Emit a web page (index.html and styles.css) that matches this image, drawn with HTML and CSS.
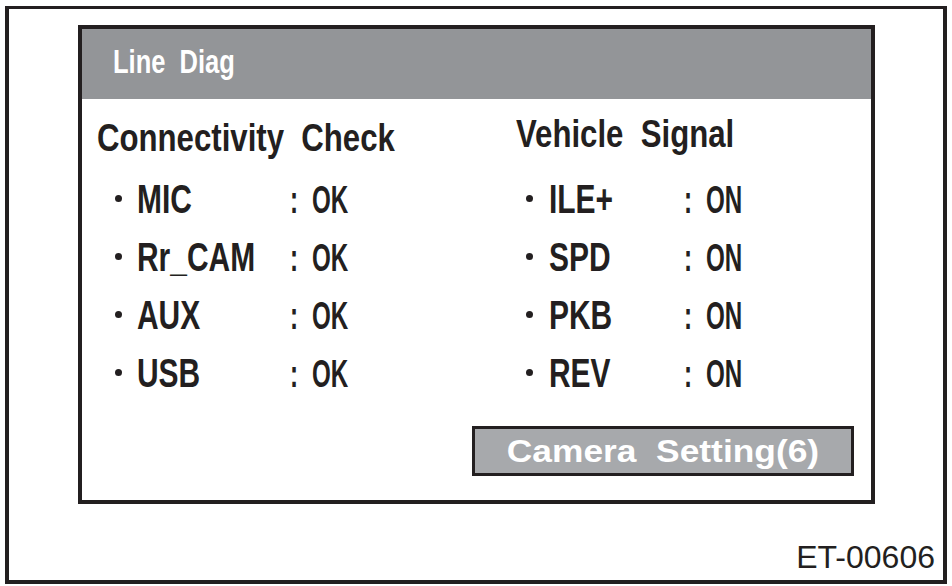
FILE: index.html
```html
<!DOCTYPE html>
<html lang="en">
<head>
    <meta charset="UTF-8">
    <meta name="viewport" content="width=device-width, initial-scale=1.0">
    <title>Line Diag</title>
    <link rel="stylesheet" href="styles.css">
</head>
<body>
    <div class="frame">
        <div class="screen">
            <div class="title-bar"><span class="narrow">Line&nbsp; Diag</span></div>

            <div class="screen-body">
                <section class="col col-left">
                    <h2 class="col-title"><span class="narrow">Connectivity&nbsp; Check</span></h2>
                    <ul class="status-list">
                        <li class="status-row"><span class="dot"></span><span class="name">MIC</span><span class="sep">:</span><span class="value">OK</span></li>
                        <li class="status-row"><span class="dot"></span><span class="name">Rr_CAM</span><span class="sep">:</span><span class="value">OK</span></li>
                        <li class="status-row"><span class="dot"></span><span class="name">AUX</span><span class="sep">:</span><span class="value">OK</span></li>
                        <li class="status-row"><span class="dot"></span><span class="name">USB</span><span class="sep">:</span><span class="value">OK</span></li>
                    </ul>
                </section>

                <section class="col col-right">
                    <h2 class="col-title"><span class="narrow">Vehicle&nbsp; Signal</span></h2>
                    <ul class="status-list">
                        <li class="status-row"><span class="dot"></span><span class="name">ILE+</span><span class="sep">:</span><span class="value">ON</span></li>
                        <li class="status-row"><span class="dot"></span><span class="name">SPD</span><span class="sep">:</span><span class="value">ON</span></li>
                        <li class="status-row"><span class="dot"></span><span class="name">PKB</span><span class="sep">:</span><span class="value">ON</span></li>
                        <li class="status-row"><span class="dot"></span><span class="name">REV</span><span class="sep">:</span><span class="value">ON</span></li>
                    </ul>
                    <button class="btn"><span class="btn-label">Camera&nbsp; Setting(6)</span></button>
                </section>
            </div>
        </div>

        <div class="code">ET-00606</div>
    </div>
</body>
</html>
```

FILE: styles.css
```css
:root {
    --ink: #231f20;
    --bar-gray: #939598;
    --btn-gray: #a7a9ac;
}

* {
    box-sizing: border-box;
}

body {
    margin: 0;
    background: #fff;
    color: var(--ink);
    font-family: 'Liberation Sans', Arial, sans-serif;
}

/* condensed look: no narrow face installed, so squeeze the bold one */
.narrow {
    display: inline-block;
    transform: scaleX(.82);
    transform-origin: left;
    white-space: nowrap;
}

.frame {
    width: 942px;
    height: 578px;
    margin: 6px 0 0 5px;
    border: 4px solid var(--ink);
    border-top-width: 3px;
}

.screen {
    width: 797px;
    height: 479px;
    margin: 16px 0 0 69px;
    border: 4px solid var(--ink);
    display: flex;
    flex-direction: column;
}

.title-bar {
    height: 70px;
    padding: 0 0 6px 31px;
    background: var(--bar-gray);
    color: #fff;
    font-weight: bold;
    font-size: 34px;
    line-height: 64px;
}

.title-bar .narrow {
    transform: scaleX(.75);
}

.screen-body {
    flex: 1;
    display: grid;
    grid-template-columns: 390px 1fr;
}

.col-title {
    margin: 0;
    font-weight: bold;
    font-size: 38px;
    line-height: 44px;
}

.col-left {
    padding: 17px 0 0 15px;
}

.col-right {
    padding-top: 13px;
}

.col-right .col-title {
    padding-left: 44px;
}

.status-list {
    list-style: none;
    margin: 10px 0 0;
    padding: 0;
}

.col-left .status-list {
    padding-left: 18px;
}

.col-right .status-list {
    margin-top: 14px;
    padding-left: 54px;
}

.status-row {
    display: grid;
    grid-template-columns: 22px 153px 22px auto;
    align-items: baseline;
    height: 58px;
    line-height: 58px;
}

.col-right .status-row {
    grid-template-columns: 23px 135px 22px auto;
}

.dot {
    align-self: start;
    width: 7px;
    height: 7px;
    margin-top: 25px;
    border-radius: 50%;
    background: var(--ink);
}

.name {
    display: inline-block;
    font-weight: bold;
    font-size: 41px;
    transform: scaleX(.73);
    transform-origin: left;
    white-space: nowrap;
}

.sep,
.value {
    display: inline-block;
    font-weight: bold;
    font-size: 39px;
    transform: scaleX(.62);
    transform-origin: left;
}

.btn {
    display: block;
    width: 382px;
    height: 50px;
    margin-top: 24px;
    padding: 2px 0 0;
    border: 3px solid var(--ink);
    background: var(--btn-gray);
    color: #fff;
    font-family: 'Liberation Sans', Arial, sans-serif;
    font-weight: bold;
    font-size: 31px;
    line-height: 42px;
    text-align: center;
}

.btn-label {
    display: inline-block;
    transform: scaleX(1.14);
    white-space: nowrap;
}

.code {
    margin-top: 35px;
    padding-right: 8px;
    text-align: right;
    font-size: 32px;
    line-height: 36px;
}
```
